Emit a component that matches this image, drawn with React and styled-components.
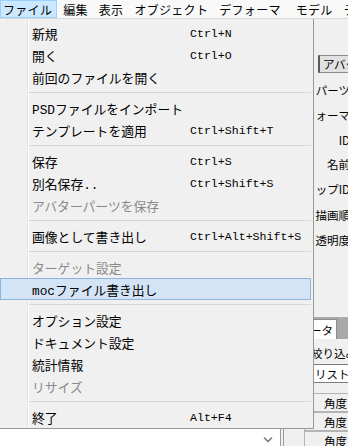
import React from 'react';
import styled, { createGlobalStyle } from 'styled-components';

const GlobalStyle = createGlobalStyle`
  html, body {
    margin: 0;
    padding: 0;
  }
  body {
    width: 348px;
    height: 446px;
    overflow: hidden;
    background: #f0f0f0;
    font-family: "Noto Sans CJK JP", "Liberation Sans", sans-serif;
    color: #000;
  }
`;

const Window = styled.div`
  position: relative;
  width: 348px;
  height: 446px;
  display: flex;
  flex-direction: column;
  overflow: hidden;
`;

const MenuBar = styled.div`
  height: 18px;
  flex: none;
  display: flex;
  align-items: stretch;
  gap: 3px;
  background: #f9f9f9;
  border-bottom: 1px solid #d9d9d9;
  white-space: nowrap;
  font-size: 12px;
  letter-spacing: 0.3px;
`;

const BarItem = styled.div`
  display: flex;
  align-items: center;
  padding: 0 ${p => 4 + (p.$extra || 0)}px 0 2px;
  border: 1px solid ${p => (p.$open ? '#99d1ff' : 'transparent')};
  background: ${p => (p.$open ? '#cce8ff' : 'transparent')};
`;

const Body = styled.div`
  flex: 1;
  display: flex;
  overflow: hidden;
`;

const LeftPane = styled.div`
  width: 280px;
  flex: none;
  display: flex;
  flex-direction: column;
  background: #fff;
`;

const LeftFooter = styled.div`
  margin-top: auto;
  height: 14px;
  display: flex;
  align-items: center;
  justify-content: flex-end;
  padding-right: 7px;
`;

const Splitter = styled.div`
  width: 2px;
  flex: none;
  background: #f0f0f0;
  border-left: 1px solid #9c9c9c;
  border-right: 1px solid #9c9c9c;
`;

const RightPane = styled.div`
  width: 80px;
  flex: none;
  display: flex;
  flex-direction: column;
  background: #f0f0f0;
  font-size: 11.5px;
  white-space: nowrap;
`;

const PanelTab = styled.div`
  margin: 36px 0 0 34px;
  height: 18px;
  display: flex;
  align-items: center;
  padding-left: 3px;
  background: #e1e1e1;
  border: 1px solid #8c8c8c;
  border-left: 2px solid #5a5a5a;
  border-right: none;
  box-sizing: border-box;
`;

const FormRows = styled.div`
  margin-top: 4px;
  width: 66px;
  display: flex;
  flex-direction: column;
`;

const FormLabel = styled.div`
  height: ${p => p.$h}px;
  display: flex;
  align-items: center;
  justify-content: flex-end;
`;

const LowerSection = styled.div`
  margin-top: 65px;
  display: flex;
  flex-direction: column;
`;

const TabBar = styled.div`
  height: 22px;
  display: flex;
  align-items: flex-end;
  background: #a9a9a9;
`;

const ParamTab = styled.div`
  width: 50px;
  height: 20px;
  margin-left: 3px;
  box-sizing: border-box;
  display: flex;
  align-items: center;
  justify-content: flex-end;
  padding-right: 3px;
  overflow: hidden;
  background: #fff;
  border: 1px solid #8c8c8c;
  border-bottom: none;
`;

const FilterRow = styled.div`
  margin-top: 4px;
  height: 19px;
  display: flex;
  align-items: center;
  padding-left: 27px;
`;

const ListBox = styled.div`
  margin: 2px 0 0 16px;
  height: 19px;
  box-sizing: border-box;
  display: flex;
  align-items: center;
  padding-left: 14px;
  background: #fff;
  border: 1px solid #7a7a7a;
`;

const ParamRow = styled.div`
  margin: ${p => (p.$first ? 10 : 0)}px 0 0 20px;
  height: 19px;
  box-sizing: border-box;
  display: flex;
  align-items: center;
  padding-left: 19px;
  background: #f0f0f0;
  border: 1px solid #b4b4b4;
  border-right: none;
`;

const Menu = styled.div`
  position: absolute;
  top: 19px;
  left: 0;
  width: 314px;
  height: 410px;
  box-sizing: border-box;
  padding: 3px 0 0;
  background: linear-gradient(
    to right,
    #f0f0f0 27px,
    #e2e3e3 27px,
    #e2e3e3 28px,
    #ffffff 28px,
    #ffffff 29px,
    #f0f0f0 29px
  );
  border-right: 1px solid #979797;
  border-bottom: 1px solid #979797;
  display: flex;
  flex-direction: column;
`;

const MenuItem = styled.div`
  height: 22px;
  box-sizing: border-box;
  margin: 0 2px 0 0;
  padding-left: 31px;
  display: grid;
  grid-template-columns: 158px auto;
  align-items: center;
  border: 1px solid ${p => (p.$active ? '#8db2dd' : 'transparent')};
  background: ${p => (p.$active ? '#d3e4f6' : 'transparent')};
  color: ${p => (p.$disabled ? '#8a8a8a' : '#000')};
  white-space: nowrap;
`;

const ItemLabel = styled.span`
  font-family: "Liberation Mono", "Noto Sans CJK JP", monospace;
  font-size: 12.8px;
`;

const Shortcut = styled.span`
  font-family: "Liberation Mono", monospace;
  font-size: 11.6px;
`;

const Separator = styled.div`
  height: 1px;
  margin: 4px 2px 4px 29px;
  background: #d7d7d7;
`;

const menuItems = [
  { label: '新規', key: 'Ctrl+N' },
  { label: '開く', key: 'Ctrl+O' },
  { label: '前回のファイルを開く' },
  'sep',
  { label: 'PSDファイルをインポート' },
  { label: 'テンプレートを適用', key: 'Ctrl+Shift+T' },
  'sep',
  { label: '保存', key: 'Ctrl+S' },
  { label: '別名保存..', key: 'Ctrl+Shift+S' },
  { label: 'アバターパーツを保存', disabled: true },
  'sep',
  { label: '画像として書き出し', key: 'Ctrl+Alt+Shift+S' },
  'sep',
  { label: 'ターゲット設定', disabled: true },
  { label: 'mocファイル書き出し', active: true },
  'sep',
  { label: 'オプション設定' },
  { label: 'ドキュメント設定' },
  { label: '統計情報' },
  { label: 'リサイズ', disabled: true },
  'sep',
  { label: '終了', key: 'Alt+F4' },
];

const barItems = [
  ['ファイル', 0],
  ['編集', 0],
  ['表示', 0],
  ['オブジェクト', 0],
  ['デフォーマ', 4],
  ['モデル', 0],
  ['テクスチャ', 0],
];

const formLabels = [
  ['パーツ', 25],
  ['デフォーマ', 26],
  ['ID', 24],
  ['名前', 24],
  ['クリップID', 26],
  ['描画順', 26],
  ['透明度', 24],
];

const App = () => {
  return (
    <>
      <GlobalStyle />
      <Window>
        <MenuBar>
          {barItems.map(([t, extra], i) => (
            <BarItem key={t} $open={i === 0} $extra={extra}>{t}</BarItem>
          ))}
        </MenuBar>
        <Body>
          <LeftPane>
            <LeftFooter>
              <svg width="10" height="7" viewBox="0 0 10 7">
                <polyline points="1,1.5 5,5.5 9,1.5" fill="none" stroke="#707070" strokeWidth="1.4" />
              </svg>
            </LeftFooter>
          </LeftPane>
          <Splitter />
          <RightPane>
            <PanelTab>アバターパーツ</PanelTab>
            <FormRows>
              {formLabels.map(([t, h]) => (
                <FormLabel key={t} $h={h}>{t}</FormLabel>
              ))}
            </FormRows>
            <LowerSection>
              <TabBar>
                <ParamTab>パラメータ</ParamTab>
              </TabBar>
              <FilterRow>絞り込み</FilterRow>
              <ListBox>リスト</ListBox>
              <ParamRow $first>角度 X</ParamRow>
              <ParamRow>角度 Y</ParamRow>
              <ParamRow>角度 Z</ParamRow>
            </LowerSection>
          </RightPane>
        </Body>
        <Menu>
          {menuItems.map((it, i) =>
            it === 'sep' ? (
              <Separator key={i} />
            ) : (
              <MenuItem key={i} $active={it.active} $disabled={it.disabled}>
                <ItemLabel>{it.label}</ItemLabel>
                {it.key && <Shortcut>{it.key}</Shortcut>}
              </MenuItem>
            )
          )}
        </Menu>
      </Window>
    </>
  );
};

export default App;
